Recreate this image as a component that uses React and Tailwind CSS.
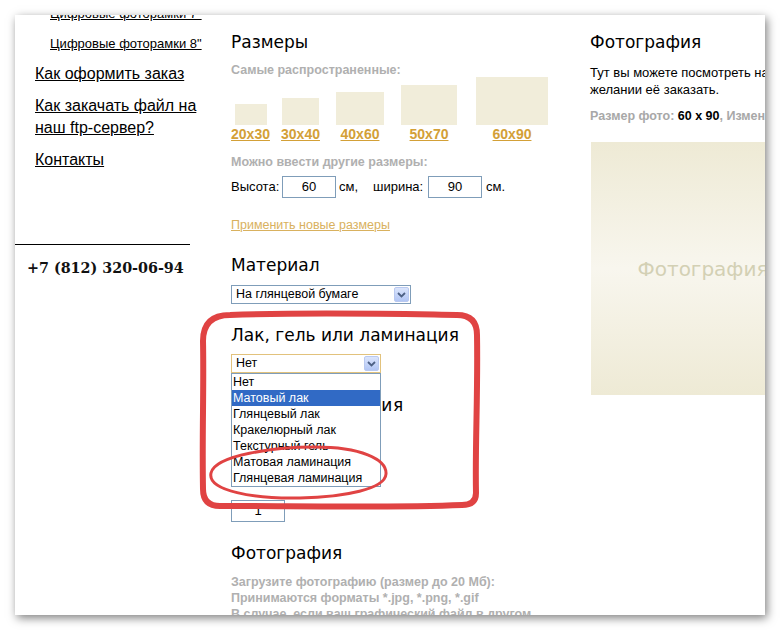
import React from "react";

const SANS = "font-['Liberation_Sans',Arial,sans-serif]";
const VERD = "font-['DejaVu_Sans',Verdana,sans-serif]";
const SERIF = "font-['DejaVu_Serif',Georgia,serif]";
const GRAY = "font-['Liberation_Sans',Arial,sans-serif] font-bold text-[12.5px] leading-[16px] text-[#b0b0b0] whitespace-nowrap";

function H({ children, className = "" }) {
  return (
    <h2 className={`${VERD} text-[17px] leading-[24px] text-black font-normal whitespace-nowrap ${className}`}>
      {children}
    </h2>
  );
}

function ComboButton() {
  return (
    <div className="ml-auto mr-[1px] w-[15px] h-[15px] rounded-[2px] border border-[#b9c9f0] bg-linear-to-b from-[#dbe5fc] to-[#b2c6f5] flex items-center justify-center">
      <svg width="9" height="6" viewBox="0 0 9 6">
        <path d="M1 1 L4.5 4.5 L8 1" stroke="#4d6185" strokeWidth="1.8" fill="none" />
      </svg>
    </div>
  );
}

const sizes = [
  { label: "20x30", sw: "w-[32px] h-[21px]", box: "w-[39px] ml-0" },
  { label: "30x40", sw: "w-[37px] h-[27px]", box: "w-[39px] ml-[11px]" },
  { label: "40x60", sw: "w-[48px] h-[33px]", box: "w-[48px] ml-[16px]" },
  { label: "50x70", sw: "w-[56px] h-[40px]", box: "w-[56px] ml-[17px]" },
  { label: "60x90", sw: "w-[72px] h-[48px]", box: "w-[72px] ml-[19px]" },
];

const options = [
  "Нет",
  "Матовый лак",
  "Глянцевый лак",
  "Кракелюрный лак",
  "Текстурный гель",
  "Матовая ламинация",
  "Глянцевая ламинация",
];

function LeftCol() {
  return (
    <div className={`w-[175px] shrink-0 ${SANS} text-black`}>
      <div className="-mt-[9px] pl-[35px] text-[13px] leading-[16px] whitespace-nowrap">
        <a className="block underline">Цифровые фоторамки 7"</a>
        <a className="block underline mt-[14px]">Цифровые фоторамки 8"</a>
      </div>
      <div className="pl-[20px] text-[16px] leading-[22px] whitespace-nowrap">
        <a className="block underline mt-[11px]">Как оформить заказ</a>
        <a className="block underline mt-[10px]">
          Как закачать файл на
          <br />
          наш ftp-сервер?
        </a>
        <a className="block underline mt-[10px]">Контакты</a>
      </div>
      <div className="mt-[73px] border-t border-black" />
      <div className={`${SERIF} mt-[11px] pl-[12px] text-[14.3px] leading-[24px] font-bold text-[#111] whitespace-nowrap`}>
        +7 (812) 320-06-94
      </div>
    </div>
  );
}

function MiddleCol() {
  return (
    <div className={`ml-[41px] w-[359px] shrink-0 ${SANS} text-black`}>
      <H className="mt-[15px]">Размеры</H>
      <p className={`${GRAY} mt-[8px]`}>Самые распространенные:</p>
      <div className="mt-[-1px] flex items-end">
        {sizes.map((s) => (
          <div key={s.label} className={`flex flex-col items-center ${s.box}`}>
            <div className={`bg-[#f1edda] ${s.sw}`} />
            <a className="mt-[1px] text-[14px] leading-[16px] font-bold text-[#d3a037] underline whitespace-nowrap">
              {s.label}
            </a>
          </div>
        ))}
      </div>
      <p className={`${GRAY} mt-[12px]`}>Можно ввести другие размеры:</p>
      <div className="mt-[6px] flex items-center h-[22px] text-[13px] whitespace-nowrap">
        <span className="w-[51px]">Высота:</span>
        <div className="w-[54px] h-[22px] border border-[#7f9db9] flex items-center justify-center">60</div>
        <span className="w-[37px] pl-[3px]">см,</span>
        <span className="w-[55px]">ширина:</span>
        <div className="w-[54px] h-[22px] border border-[#7f9db9] flex items-center justify-center">90</div>
        <span className="pl-[4px]">см.</span>
      </div>
      <a className="block mt-[19px] text-[12.5px] leading-[16px] text-[#d9b15e] underline whitespace-nowrap">
        Применить новые размеры
      </a>
      <H className="mt-[20px]">Материал</H>
      <div className="mt-[8px] w-[180px] h-[19px] border border-[#7f9db9] bg-white flex items-center">
        <span className="pl-[4px] text-[12.5px] leading-[15px] whitespace-nowrap">На глянцевой бумаге</span>
        <ComboButton />
      </div>
      <H className="mt-[19px]">Лак, гель или ламинация</H>
      <div className="relative mt-[7px] w-[150px]">
        <div className="h-[19px] border border-[#e2c27c] bg-white flex items-center">
          <span className="pl-[4px] text-[12.5px] leading-[15px]">Нет</span>
          <ComboButton />
        </div>
        <div className="absolute left-0 top-full z-10 w-[150px] border border-[#7f9db9] bg-white">
          {options.map((o, i) => (
            <div
              key={o}
              className={`h-[16px] pl-[1px] text-[12.5px] leading-[16px] whitespace-nowrap ${
                i === 1 ? "bg-[#316ac5] text-white" : "text-black"
              }`}
            >
              {o}
            </div>
          ))}
        </div>
      </div>
      <H className="mt-[20px] tracking-[0.6px]">Упаковка изделия</H>
      <div className="mt-[83px] w-[54px] h-[22px] border border-[#7f9db9] flex items-center justify-center text-[13px]">
        1
      </div>
      <H className="mt-[19px]">Фотография</H>
      <div className={`${GRAY} mt-[9px]`}>
        <p>Загрузите фотографию (размер до 20 Мб):</p>
        <p>Принимаются форматы *.jpg, *.png, *.gif</p>
        <p>В случае, если ваш графический файл в другом</p>
      </div>
    </div>
  );
}

function RightCol() {
  return (
    <div className={`w-[260px] shrink-0 ${SANS} text-black`}>
      <H className="mt-[15px]">Фотография</H>
      <p className="mt-[10px] text-[13px] leading-[17px] whitespace-nowrap">
        Тут вы можете посмотреть на фотографию и при
        <br />
        желании её заказать.
      </p>
      <p className="mt-[10px] text-[12.5px] leading-[16px] font-bold whitespace-nowrap">
        <span className="text-[#a8a8a8]">Размер фото: </span>
        <span className="text-black">60 x 90</span>
        <span className="text-[#a8a8a8]">, Изменить размер</span>
      </p>
      <div className="mt-[18px] ml-[1px] w-[224px] h-[253px] bg-linear-to-b from-[#eeead5] via-[#f8f6ee] to-[#eeead5] flex items-center justify-center">
        <span className={`${VERD} text-[20px] text-[#d3d0b4] whitespace-nowrap`}>Фотография</span>
      </div>
    </div>
  );
}

function Marks() {
  const rect =
    "M 215 300 C 300 297, 380 299, 442 300 Q 462 300, 462 320 C 463 380, 460 430, 461 478 Q 461 490, 447 490 C 380 493, 280 491, 205 491 Q 188 491, 188 474 C 187 420, 189 370, 188 326 Q 188 300, 215 300 Z";
  const oval =
    "M 196 458 C 200 440, 260 432, 300 432 C 345 432, 372 444, 371 459 C 370 474, 330 482, 285 483 C 240 484, 192 476, 196 458 Z";
  return (
    <svg className="absolute inset-0 z-20 pointer-events-none" width="750" height="600" viewBox="0 0 750 600">
      <path d={rect} fill="none" stroke="#e04343" strokeWidth="6" strokeLinejoin="round" />
      <path d={oval} fill="none" stroke="#e04343" strokeWidth="3" />
    </svg>
  );
}

export default function App() {
  return (
    <div className="w-[780px] h-[630px] bg-white p-[15px]">
      <div className="relative w-[750px] h-[600px] overflow-hidden bg-white shadow-[2px_3px_9px_rgba(0,0,0,0.5)]">
        <div className="flex items-start">
          <LeftCol />
          <MiddleCol />
          <RightCol />
        </div>
        <Marks />
      </div>
    </div>
  );
}
